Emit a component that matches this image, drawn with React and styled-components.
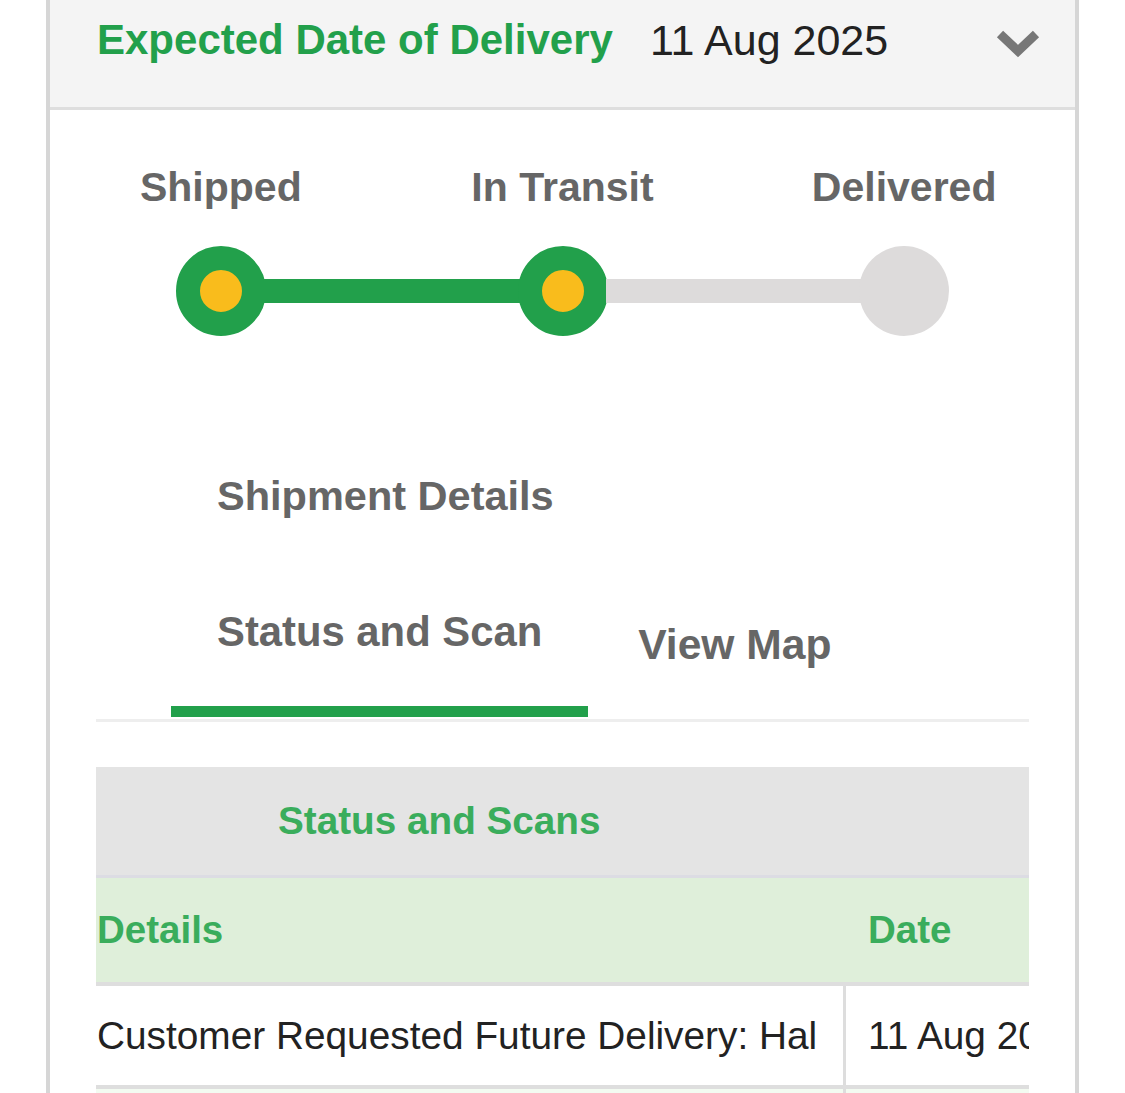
import React from 'react';
import styled, { createGlobalStyle } from 'styled-components';

const GlobalStyle = createGlobalStyle`
    body {
        margin: 0;
        background: #ffffff;
        font-family: 'Liberation Sans', Arial, sans-serif;
    }
`;

const Page = styled.div`
    padding: 0 46px;
    height: 1093px;
    overflow: hidden;
`;

const Panel = styled.section`
    border-left: 4px solid #d6d6d6;
    border-right: 4px solid #d6d6d6;
    min-height: 1093px;
`;

const Header = styled.header`
    display: flex;
    align-items: flex-start;
    height: 89px;
    padding: 18px 35px 0 47px;
    background: #f4f4f4;
    border-bottom: 3px solid #dedede;
`;

const Title = styled.span`
    color: #22a04b;
    font-size: 42px;
    line-height: 44px;
    font-weight: 700;
    margin-right: 37px;
`;

const HeaderDate = styled.span`
    color: #222;
    font-size: 43px;
    line-height: 44px;
`;

const Chevron = styled.svg`
    margin-left: auto;
    margin-top: 11px;
    width: 44px;
    height: 30px;
`;

const Steps = styled.div`
    display: grid;
    grid-template-columns: repeat(3, 1fr);
    padding-top: 53px;
`;

const StepLabel = styled.div`
    text-align: center;
    color: #666;
    font-size: 41px;
    line-height: 48px;
    font-weight: 700;
`;

const Track = styled.div`
    display: flex;
    align-items: center;
    margin: 35px calc(100% / 6 - 45px) 0;
`;

const Dot = styled.div`
    flex: none;
    width: 90px;
    height: 90px;
    border-radius: 50%;
    box-sizing: border-box;
    background: ${(p) => (p.$done ? '#f9bc1c' : '#dddbdb')};
    border: ${(p) => (p.$done ? '24.5px solid #22a04b' : 'none')};
`;

const Line = styled.div`
    flex: 1;
    height: 24px;
    margin: 0 -2px;
    background: ${(p) => (p.$done ? '#22a04b' : '#dddbdb')};
`;

const SectionTitle = styled.h2`
    margin: 136px 0 0 167px;
    color: #666;
    font-size: 41.5px;
    line-height: 48px;
    font-weight: 700;
`;

const Body = styled.div`
    margin: 0 46px;
`;

const Tabs = styled.nav`
    display: flex;
    align-items: flex-end;
    margin-top: 88px;
    padding-left: 75px;
    border-bottom: 3px solid #eeeeee;
`;

const Tab = styled.div`
    color: #666;
    font-size: ${(p) => (p.$active ? '41.8px' : '42.6px')};
    line-height: 48px;
    font-weight: 700;
    padding: ${(p) => (p.$active ? '0 46px 50px' : '0 46px 51px 50px')};
    margin-bottom: ${(p) => (p.$active ? '2px' : '0')};
    border-bottom: ${(p) => (p.$active ? '11px solid #22a04b' : 'none')};
    white-space: nowrap;
`;

const Table = styled.div`
    margin-top: 45px;
    overflow: hidden;
    white-space: nowrap;
`;

const Caption = styled.div`
    height: 108px;
    display: flex;
    align-items: center;
    padding-left: 182px;
    background: #e4e4e4;
    border-bottom: 3px solid #dcdce3;
    color: #3aad5c;
    font-size: 38.7px;
    font-weight: 700;
`;

const Row = styled.div`
    display: grid;
    grid-template-columns: 747px 300px;
    height: ${(p) => (p.$head ? '104px' : '99px')};
    background: ${(p) => (p.$head ? '#dfefda' : p.$tint ? '#f3fbf1' : '#ffffff')};
    border-bottom: 4px solid #dedede;
`;

const Cell = styled.div`
    display: flex;
    align-items: center;
    padding-left: ${(p) => (p.$first ? '1px' : '22px')};
    border-left: ${(p) => (p.$first || p.$head ? 'none' : '3px solid #dddddd')};
    margin-left: ${(p) => (p.$head && !p.$first ? '3px' : '0')};
    color: ${(p) => (p.$head ? '#3aad5c' : '#222')};
    font-size: ${(p) => (p.$head ? '38.5px' : '38.8px')};
    font-weight: ${(p) => (p.$head ? 700 : 400)};
    overflow: hidden;
`;

const App = () => {
    const steps = ['Shipped', 'In Transit', 'Delivered'];

    return (
        <Page>
            <GlobalStyle />
            <Panel>
                <Header>
                    <Title>Expected Date of Delivery</Title>
                    <HeaderDate>11 Aug 2025</HeaderDate>
                    <Chevron viewBox='0 0 44 30'>
                        <polyline
                            points='4,5 22,22 40,5'
                            fill='none'
                            stroke='#777'
                            strokeWidth='9'
                        />
                    </Chevron>
                </Header>

                <Steps>
                    {steps.map((s) => (
                        <StepLabel key={s}>{s}</StepLabel>
                    ))}
                </Steps>
                <Track>
                    <Dot $done />
                    <Line $done />
                    <Dot $done />
                    <Line />
                    <Dot />
                </Track>

                <SectionTitle>Shipment Details</SectionTitle>

                <Body>
                    <Tabs>
                        <Tab $active>Status and Scan</Tab>
                        <Tab>View Map</Tab>
                    </Tabs>

                    <Table>
                        <Caption>Status and Scans</Caption>
                        <Row $head>
                            <Cell $head $first>Details</Cell>
                            <Cell $head>Date</Cell>
                        </Row>
                        <Row>
                            <Cell $first>Customer Requested Future Delivery: Hal</Cell>
                            <Cell>11 Aug 2025</Cell>
                        </Row>
                        <Row $tint>
                            <Cell $first />
                            <Cell />
                        </Row>
                    </Table>
                </Body>
            </Panel>
        </Page>
    );
};

export default App;
